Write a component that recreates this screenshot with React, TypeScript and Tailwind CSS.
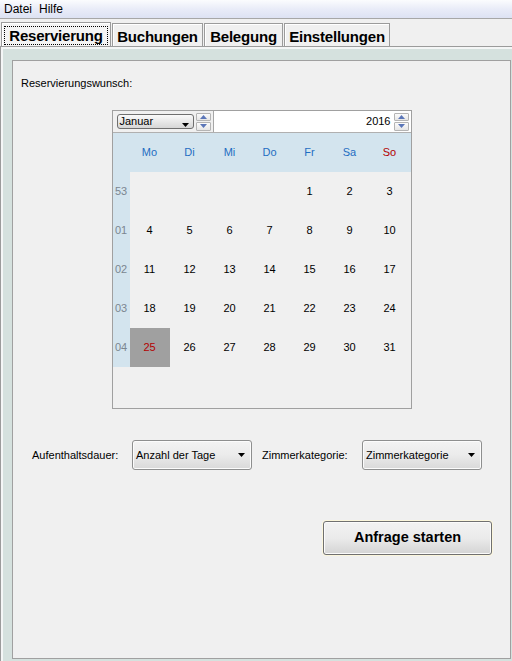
import React from "react";

const Up = () => (
  <svg width="7" height="4" viewBox="0 0 7 4"><path d="M3.5 0 L7 4 L0 4 Z" fill="#5b76b8" /></svg>
);
const Down = () => (
  <svg width="7" height="4" viewBox="0 0 7 4"><path d="M0 0 L7 0 L3.5 4 Z" fill="#5b76b8" /></svg>
);
const Arrow = () => (
  <svg width="7" height="4" viewBox="0 0 7 4"><path d="M0 0 L7 0 L3.5 4 Z" fill="#000" /></svg>
);

function Spinner() {
  return (
    <div className="flex flex-col w-[15px] h-[18px] gap-px">
      <div className="flex-1 border border-[#b4b4b4] rounded-[1px] bg-gradient-to-b from-[#fbfbfb] to-[#e6e6e6] flex items-center justify-center">
        <Up />
      </div>
      <div className="flex-1 border border-[#b4b4b4] rounded-[1px] bg-gradient-to-b from-[#fbfbfb] to-[#e6e6e6] flex items-center justify-center">
        <Down />
      </div>
    </div>
  );
}

function Combo({ label, width }: { label: string; width: string }) {
  return (
    <div
      className={`${width} h-[30px] rounded-[3px] border border-[#8e8f8f] bg-gradient-to-b from-[#f3f3f3] via-[#ebebeb] to-[#d9d9d9] flex items-center justify-between pl-[3px] pr-[6px] shadow-[inset_0_0_0_1px_#fcfcfc]`}
    >
      <span className="text-[11px] text-black">{label}</span>
      <Arrow />
    </div>
  );
}

const days: (number | null)[][] = [
  [null, null, null, null, 1, 2, 3],
  [4, 5, 6, 7, 8, 9, 10],
  [11, 12, 13, 14, 15, 16, 17],
  [18, 19, 20, 21, 22, 23, 24],
  [25, 26, 27, 28, 29, 30, 31],
];
const weeks = ["53", "01", "02", "03", "04"];
const names = ["Mo", "Di", "Mi", "Do", "Fr", "Sa", "So"];

export default function App() {
  return (
    <div className="w-[512px] h-[661px] overflow-hidden bg-[#f0f0f0] flex flex-col font-['Liberation_Sans',Arial,sans-serif] text-black">
      {/* menu bar */}
      <div className="h-[19px] shrink-0 border-b border-[#a7a7a7] bg-gradient-to-b from-[#fbfcfe] via-[#e9ecf8] to-[#dde2f3] flex items-center pl-[4px] gap-[7px] text-[12px] leading-none">
        <span>Datei</span>
        <span>Hilfe</span>
      </div>

      {/* tab strip */}
      <div className="h-[27px] shrink-0 flex items-end bg-[#f0f0f0] tracking-[-0.2px]">
        <div className="ml-[1px] w-[110px] h-[24px] border-t border-l border-r border-[#9b9b9b] shadow-[inset_1px_1px_0_#ffffff] bg-[#f4f4f4] flex items-start justify-center pt-[3px]">
          <div className="w-[104px] h-[19px] border border-dotted border-black flex items-center justify-center text-[15px] font-bold leading-none">
            Reservierung
          </div>
        </div>
        <div className="ml-[1px] w-[91px] h-[23px] border-t border-l border-r border-[#9b9b9b] shadow-[inset_1px_1px_0_#ffffff] flex items-center justify-center text-[15px] font-bold leading-none pt-[2px]">
          Buchungen
        </div>
        <div className="ml-[1px] w-[79px] h-[23px] border-t border-l border-r border-[#9b9b9b] shadow-[inset_1px_1px_0_#ffffff] flex items-center justify-center text-[15px] font-bold leading-none pt-[2px]">
          Belegung
        </div>
        <div className="ml-[1px] w-[106px] h-[23px] border-t border-l border-r border-[#9b9b9b] shadow-[inset_1px_1px_0_#ffffff] flex items-center justify-center text-[15px] font-bold leading-none pt-[2px]">
          Einstellungen
        </div>
      </div>

      {/* tab pane */}
      <div className="flex-1 border-t border-l border-[#9b9b9b] bg-[#d5e1de] shadow-[inset_2px_2px_0_#f4f6f6] pl-[11px] pt-[13px]">
        <div className="w-[499px] h-[599px] border border-[#a0a0a0] bg-[#f0f0f0] flex flex-col">
          <div className="pl-[8px] mt-[16px] text-[11px] leading-[13px]">Reservierungswunsch:</div>

          {/* calendar */}
          <div className="mt-[20px] self-center w-[300px] h-[299px] border border-[#a0a0a0] bg-[#f0f0f0] flex flex-col">
            <div className="h-[21px] flex items-center">
              <div className="ml-[4px] w-[77px] h-[15px] rounded-[3px] border border-[#6f6f6f] bg-gradient-to-b from-[#fafafa] to-[#d6d6d6] flex items-center justify-between pl-[2px] pr-[4px]">
                <span className="text-[11px] leading-none">Januar</span>
                <svg width="7" height="4" viewBox="0 0 7 4" className="mt-[6px]"><path d="M0 0 L7 0 L3.5 4 Z" fill="#000" /></svg>
              </div>
              <div className="ml-[2px]"><Spinner /></div>
              <div className="ml-[2px] flex-1 h-full border-l border-[#a6a6a6] bg-white flex items-center justify-end pr-[2px]">
                <span className="text-[11px] leading-none mr-[3px]">2016</span>
                <Spinner />
              </div>
            </div>
            <div className="h-px bg-[#b0b0b0]" />
            <div className="grid grid-cols-[17px_repeat(7,40px)] bg-[#d3e4ee] h-[39px] items-center text-[11px]">
              <div />
              {names.map((n) => (
                <div key={n} className={`text-center ${n === "So" ? "text-[#b40000]" : "text-[#1f6dc2]"}`}>
                  {n}
                </div>
              ))}
            </div>
            {days.map((row, r) => (
              <div key={r} className="grid grid-cols-[17px_repeat(7,40px)] h-[39px] text-[11px]">
                <div className="bg-[#d3e4ee] flex items-center justify-center text-[#7b8690]">{weeks[r]}</div>
                {row.map((d, c) => (
                  <div
                    key={c}
                    className={`flex items-center justify-center ${d === 25 ? "bg-[#a0a0a0] text-[#b40000]" : "text-black"}`}
                  >
                    {d ?? ""}
                  </div>
                ))}
              </div>
            ))}
          </div>

          {/* stay controls */}
          <div className="mt-[31px] flex items-center text-[11px]">
            <div className="ml-[19px] w-[100px]">Aufenthaltsdauer:</div>
            <Combo label="Anzahl der Tage" width="w-[120px]" />
            <div className="ml-[10px] w-[100px]">Zimmerkategorie:</div>
            <Combo label="Zimmerkategorie" width="w-[120px]" />
          </div>

          <div className="mt-[51px] flex justify-end pr-[18px]">
            <div className="w-[169px] h-[34px] rounded-[3px] border border-[#707070] shadow-[0_0_0_1px_#fbf6dc,inset_0_0_0_1px_#fbfbfb] bg-gradient-to-b from-[#f2f2f2] via-[#ebebeb] to-[#d4d4d4] flex items-center justify-center text-[14.5px] font-bold">
              Anfrage starten
            </div>
          </div>
        </div>
      </div>
    </div>
  );
}
